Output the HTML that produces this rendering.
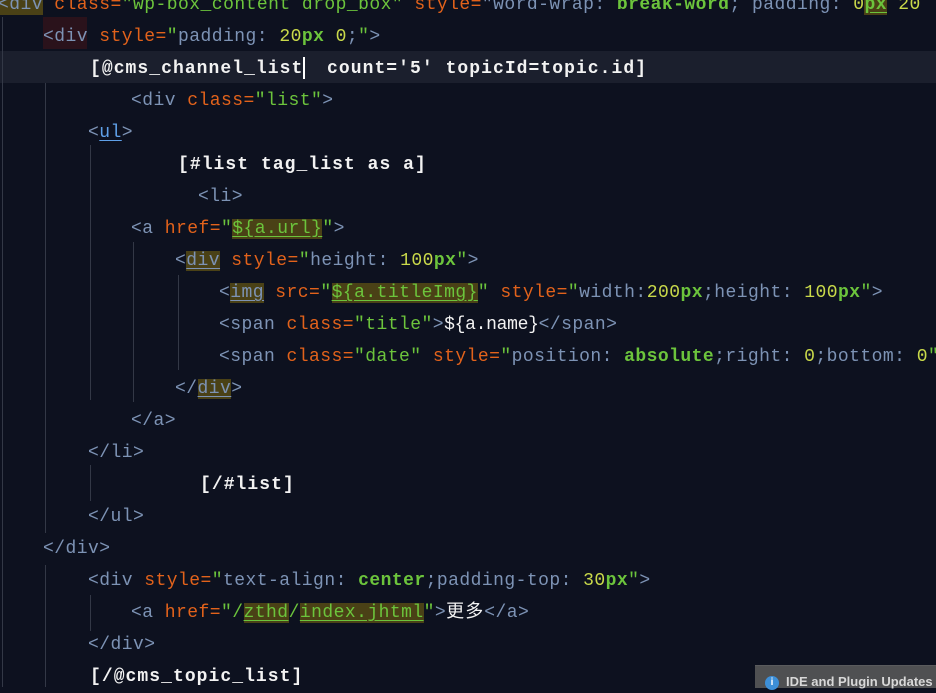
<!DOCTYPE html>
<html><head><meta charset="utf-8">
<style>
html,body{margin:0;padding:0;}
body{width:936px;height:687px;overflow:hidden;background:#0d111f;position:relative;
font-family:"Liberation Mono","Noto Sans CJK SC",monospace;}
.l{position:absolute;height:32px;line-height:32px;font-size:18px;white-space:pre;letter-spacing:0.45px;color:#7d93b5;}
.w{color:#f2f2f2;font-weight:bold;letter-spacing:1.05px;}
.t{color:#7d93b5}
.a{color:#e2621b}
.s{color:#6cc43c}
.n{color:#c9d94a}
.b{color:#6cc43c;font-weight:bold}
.h{background:#4a4116;}
.u{text-decoration:underline;text-underline-offset:3px;}
.g{position:absolute;width:1px;background:#333846;}
</style></head><body>
<div style="position:absolute;left:0;top:51px;width:936px;height:32px;background:#1b1f2d"></div>
<div style="position:absolute;left:43px;top:17px;width:44px;height:32px;background:#2a121b"></div>
<div class="g" style="left:2px;top:17px;height:670px"></div>
<div class="g" style="left:45px;top:83px;height:450px"></div>
<div class="g" style="left:90px;top:145px;height:255px"></div>
<div class="g" style="left:133px;top:242px;height:160px"></div>
<div class="g" style="left:178px;top:275px;height:95px"></div>
<div class="g" style="left:90px;top:465px;height:36px"></div>
<div class="g" style="left:45px;top:565px;height:122px"></div>
<div class="g" style="left:90px;top:595px;height:36px"></div>

<div class="l" style="left:-2px;top:-11px"><span class="h">&lt;div</span> <span class="a">class=</span><span class="s">"wp-box_content drop_box"</span> <span class="a">style=</span>"word-wrap: <span class="b">break-word</span>; padding: <span class="n">0</span><span class="b u h">px</span> <span class="n">20</span></div>
<div class="l" style="left:43px;top:21px">&lt;div <span class="a">style=</span><span class="s">"</span>padding: <span class="n">20</span><span class="b">px</span> <span class="n">0</span>;<span class="s">"</span>&gt;</div>
<div class="l w" style="left:90px;top:53px">[@cms_channel_list<span style="display:inline-block;width:2px;height:22px;background:#fff;vertical-align:middle;margin:0 -2px 0 0"></span>  count='5' topicId=topic.id]</div>
<div class="l" style="left:131px;top:85px">&lt;div <span class="a">class=</span><span class="s">"list"</span>&gt;</div>
<div class="l" style="left:88px;top:117px">&lt;<span class="u" style="color:#5fa0e8">ul</span>&gt;</div>
<div class="l w" style="left:178px;top:149px">[#list tag_list as a]</div>
<div class="l" style="left:198px;top:181px">&lt;li&gt;</div>
<div class="l" style="left:131px;top:213px">&lt;a <span class="a">href=</span><span class="s">"<span class="h u">${a.url}</span>"</span>&gt;</div>
<div class="l" style="left:175px;top:245px">&lt;<span class="h u">div</span> <span class="a">style=</span><span class="s">"</span>height: <span class="n">100</span><span class="b">px</span><span class="s">"</span>&gt;</div>
<div class="l" style="left:219px;top:277px">&lt;<span class="h u">img</span> <span class="a">src=</span><span class="s">"<span class="h u">${a.titleImg}</span>"</span> <span class="a">style=</span><span class="s">"</span>width:<span class="n">200</span><span class="b">px</span>;height: <span class="n">100</span><span class="b">px</span><span class="s">"</span>&gt;</div>
<div class="l" style="left:219px;top:309px">&lt;span <span class="a">class=</span><span class="s">"title"</span>&gt;<span class="w" style="letter-spacing:-0.3px;font-weight:normal">${a.name}</span>&lt;/span&gt;</div>
<div class="l" style="left:219px;top:341px">&lt;span <span class="a">class=</span><span class="s">"date"</span> <span class="a">style=</span><span class="s">"</span>position: <span class="b">absolute</span>;right: <span class="n">0</span>;bottom: <span class="n">0</span><span class="s">"</span></div>
<div class="l" style="left:175px;top:373px">&lt;/<span class="h u">div</span>&gt;</div>
<div class="l" style="left:131px;top:405px">&lt;/a&gt;</div>
<div class="l" style="left:88px;top:437px">&lt;/li&gt;</div>
<div class="l w" style="left:200px;top:469px">[/#list]</div>
<div class="l" style="left:88px;top:501px">&lt;/ul&gt;</div>
<div class="l" style="left:43px;top:533px">&lt;/div&gt;</div>
<div class="l" style="left:88px;top:565px">&lt;div <span class="a">style=</span><span class="s">"</span>text-align: <span class="b">center</span>;padding-top: <span class="n">30</span><span class="b">px</span><span class="s">"</span>&gt;</div>
<div class="l" style="left:131px;top:597px">&lt;a <span class="a">href=</span><span class="s">"/<span class="h u">zthd</span>/<span class="h u">index.jhtml</span>"</span>&gt;<span class="w" style="font-weight:normal">更多</span>&lt;/a&gt;</div>
<div class="l" style="left:88px;top:629px">&lt;/div&gt;</div>
<div class="l w" style="left:90px;top:661px">[/@cms_topic_list]</div>

<div style="position:absolute;left:755px;top:665px;width:181px;height:22px;background:#4f5052;border-top:1px solid #5a5b5d"></div>
<div style="position:absolute;left:765px;top:676px;width:14px;height:14px;border-radius:50%;background:#3d8fd8;color:#fff;font:bold 10px 'Liberation Sans',sans-serif;text-align:center;line-height:14px">i</div>
<div style="position:absolute;left:786px;top:674px;font:bold 13px 'Liberation Sans',sans-serif;color:#d8d8d8;white-space:nowrap">IDE and Plugin Updates</div>
</body></html>
